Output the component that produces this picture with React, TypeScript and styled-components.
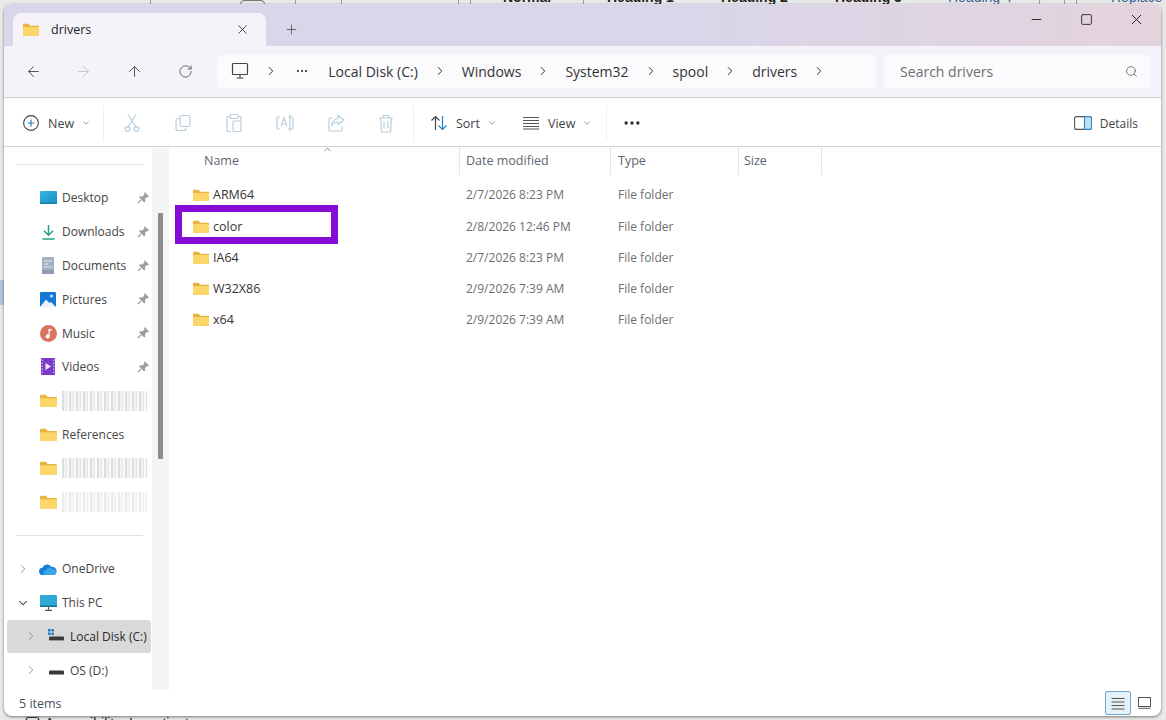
import React from "react";
import styled, { createGlobalStyle } from "styled-components";
import {
  ArrowLeft,
  ArrowRight,
  ArrowUp,
  ChevronDown,
  ChevronRight,
  ChevronUp,
  Mail,
  Minus,
  MoreHorizontal,
  Plus,
  RotateCw,
  Search,
  Square,
  X,
} from "lucide-react";

const GlobalStyle = createGlobalStyle`
  html, body { margin: 0; padding: 0; background: #e9e9e9; }
  * { box-sizing: border-box; }
  body { font-family: "Open Sans", "Noto Sans", "Liberation Sans", sans-serif; }
`;

// Page behind the explorer window
const Desktop = styled.div`
  position: relative;
  width: 1166px;
  height: 720px;
  overflow: hidden;
  padding: 4px 5px 4px 4px;
  background: #e9e9e9;
`;

const RibbonPeek = styled.div`
  position: absolute;
  top: 0;
  left: 0;
  right: 0;
  height: 5px;
  overflow: hidden;
  font-family: "Liberation Sans", Arial, sans-serif;
  font-size: 14px;
  line-height: 14px;
`;

const PeekLabel = styled.span<{ $x: number; $blue?: boolean }>`
  position: absolute;
  left: ${(p) => p.$x}px;
  top: -10px;
  white-space: nowrap;
  font-weight: ${(p) => (p.$blue ? 400 : 700)};
  color: ${(p) => (p.$blue ? "#3b5f92" : "#222")};
`;

const PeekRule = styled.i<{ $x: number }>`
  position: absolute;
  left: ${(p) => p.$x}px;
  top: 0;
  width: 1px;
  height: 5px;
  background: #9d9d9d;
`;

const PeekButton = styled.i`
  position: absolute;
  left: 240px;
  top: 0;
  width: 25px;
  height: 8px;
  border: 1px solid #777;
  border-radius: 4px;
`;

const PeekSelection = styled.div`
  position: absolute;
  left: 0;
  top: 280px;
  width: 4px;
  height: 25px;
  background: #b4c6dc;
`;

const StatusPeek = styled.div`
  position: absolute;
  left: 25px;
  bottom: -10px;
  display: flex;
  align-items: center;
  gap: 5px;
  font-family: "Liberation Sans", Arial, sans-serif;
  font-size: 14px;
  line-height: 14px;
  color: #222;
`;

const Window = styled.div`
  position: relative;
  width: 100%;
  height: 100%;
  display: flex;
  flex-direction: column;
  background: #fff;
  border-radius: 8px;
  overflow: hidden;
  box-shadow: 0 1px 3px rgba(0, 0, 0, 0.5);
`;

// Title bar
const TitleBar = styled.div`
  height: 42px;
  flex: none;
  display: flex;
  padding: 9px 0 0 9px;
  background: linear-gradient(90deg, #d9d6ea 0%, #d9d6e9 60%, #e4d3dc 100%);
`;

const Tab = styled.div`
  width: 253px;
  height: 33px;
  display: flex;
  align-items: center;
  padding: 0 16px 0 10px;
  gap: 12px;
  background: #f5f3f9;
  border-radius: 8px 8px 0 0;
  font-size: 12.5px;
  color: #222;
`;

const TabTitle = styled.span`
  flex: 1;
`;

const NewTab = styled.div`
  width: 50px;
  display: flex;
  align-items: center;
  justify-content: center;
  color: #444;
`;

const CaptionButtons = styled.div`
  margin-left: auto;
  height: 30px;
  display: flex;
  margin-top: -9px;
`;

const CaptionButton = styled.div`
  width: 50px;
  display: flex;
  align-items: center;
  justify-content: center;
  color: #222;
`;

// Address row
const AddressRow = styled.div`
  height: 52px;
  flex: none;
  display: flex;
  align-items: center;
  padding: 0 11px 1px 4px;
  background: #f5f3f9;
  border-bottom: 1px solid #cfcfd2;
`;

const NavButton = styled.div<{ $off?: boolean }>`
  width: 50.6px;
  display: flex;
  justify-content: center;
  color: ${(p) => (p.$off ? "#c3c3c8" : "#4a4a4a")};
`;

const Breadcrumb = styled.div`
  width: 659px;
  height: 33px;
  margin-left: 7px;
  display: flex;
  align-items: center;
  padding-left: 14px;
  background: #fbfafd;
  border-radius: 4px;
  font-size: 14px;
  color: #333;
`;

const CrumbSep = styled.span`
  width: 44px;
  flex: none;
  display: flex;
  justify-content: center;
  color: #333;
`;

const CrumbDots = styled.span`
  display: flex;
  width: 14px;
  margin: 0 19px 0 2px;
  color: #333;
`;

const SearchBox = styled.div`
  width: 266px;
  height: 33px;
  margin-left: 8px;
  display: flex;
  align-items: center;
  justify-content: space-between;
  padding: 0 12px 0 16px;
  background: #fbfafd;
  border-radius: 4px;
  font-size: 14px;
  color: #6f6f6f;
`;

// Command bar
const CommandBar = styled.div`
  height: 49px;
  flex: none;
  display: flex;
  align-items: center;
  padding-top: 2px;
  border-bottom: 1px solid #d4d4d4;
  font-size: 12.5px;
  color: #444;
`;

const CommandGroup = styled.div<{ $w: number }>`
  width: ${(p) => p.$w}px;
  height: 36px;
  flex: none;
  display: flex;
  align-items: center;
  border-right: 1px solid #f0f0f0;
`;

const LabelButton = styled.div<{ $pad: number; $w?: number }>`
  display: flex;
  align-items: center;
  flex: none;
  padding-left: ${(p) => p.$pad}px;
  gap: 8px;
  ${(p) => (p.$w ? `width: ${p.$w}px;` : "")}
`;

const FadedButton = styled.div`
  width: 50.8px;
  display: flex;
  justify-content: center;
`;

const FadedStart = styled.div`
  width: 3px;
`;

const DetailsButton = styled.div`
  margin-left: auto;
  padding-right: 23px;
  display: flex;
  align-items: center;
  gap: 8px;
  font-size: 12px;
`;

const SmallChevron = styled.span`
  display: flex;
  color: #8a8a8a;
  margin-left: -1px;
`;

const MoreButton = styled.div`
  padding-left: 15px;
  display: flex;
  color: #333;
`;

// Body
const Body = styled.div`
  flex: 1;
  min-height: 0;
  display: flex;
`;

const Sidebar = styled.nav`
  width: 148px;
  flex: none;
  padding-top: 17px;
  overflow: hidden;
  font-size: 12px;
  color: #444;
`;

const NavDivider = styled.div<{ $before?: number }>`
  height: 1px;
  margin: ${(p) => p.$before ?? 0}px 9px 16px 12px;
  background: #e1e1e1;
`;

const NavRow = styled.div<{ $depth?: number; $active?: boolean }>`
  position: relative;
  height: 33.8px;
  margin: 0 1px 0 3px;
  display: flex;
  align-items: center;
  padding-left: ${(p) => 9 + (p.$depth ?? 0) * 8}px;
  white-space: nowrap;
  border-radius: 3px;
  background: ${(p) => (p.$active ? "#d9d9d9" : "transparent")};
  color: ${(p) => (p.$active ? "#2a2a2a" : "#444")};
`;

const Expander = styled.span<{ $open?: boolean }>`
  width: 14px;
  margin-right: 9px;
  display: flex;
  justify-content: center;
  flex: none;
  color: ${(p) => (p.$open ? "#333" : "#888")};
`;

const NavIcon = styled.span`
  width: 18px;
  margin-right: 5px;
  display: flex;
  justify-content: center;
  flex: none;
`;

const PinSlot = styled.span`
  position: absolute;
  left: 130px;
  top: 10px;
  display: flex;
`;

const RedactedName = styled.span<{ $w: number; $fade?: number }>`
  display: block;
  width: ${(p) => p.$w}px;
  height: 20px;
  opacity: ${(p) => p.$fade ?? 1};
  background: repeating-linear-gradient(
    90deg,
    #dedede 0 2px,
    #f1f1f1 2px 4px,
    #e6e6e6 4px 5px,
    #fafafa 5px 7px
  );
`;

const ScrollGutter = styled.div`
  width: 17px;
  flex: none;
  padding: 66px 0 0 6px;
  background: #f5f5f5;
`;

const ScrollThumb = styled.div`
  width: 5px;
  height: 246px;
  background: #8c8c8c;
  border-radius: 1px;
`;

// File list
const ListPane = styled.main`
  flex: 1;
  min-width: 0;
`;

const ColumnGrid = styled.div`
  display: grid;
  grid-template-columns: 291px 151px 128px 83px;
`;

const HeaderRow = styled(ColumnGrid)`
  height: 28px;
  margin-bottom: 4.4px;
  font-size: 12.5px;
  color: #5d6670;
`;

const HeaderCell = styled.div<{ $pad: number }>`
  position: relative;
  display: flex;
  align-items: center;
  padding: 0 0 2px ${(p) => p.$pad}px;
  border-right: 1px solid #e6e6e6;
`;

const SortCaret = styled.span`
  position: absolute;
  left: 153px;
  top: -3px;
  display: flex;
  color: #777;
`;

const FileRow = styled(ColumnGrid)`
  position: relative;
  height: 31.2px;
  align-items: center;
  font-size: 12px;
  color: #6e6e6e;
`;

const NameCell = styled.div`
  display: flex;
  align-items: center;
  gap: 4px;
  padding-left: 24px;
  font-size: 12.5px;
  color: #333;
`;

const MetaCell = styled.div<{ $pad: number }>`
  padding-left: ${(p) => p.$pad}px;
`;

const CalloutBox = styled.div`
  position: absolute;
  left: 6px;
  top: -5.6px;
  width: 163px;
  height: 39px;
  border: 7px solid #850cd4;
  pointer-events: none;
`;

// Status bar
const StatusBar = styled.footer`
  height: 26px;
  flex: none;
  display: flex;
  align-items: center;
  justify-content: space-between;
  padding: 0 10px 0 15px;
  font-size: 12.5px;
  color: #47525e;
`;

const ViewToggles = styled.div`
  display: flex;
  align-items: center;
  gap: 6px;
`;

const ViewToggle = styled.div<{ $on?: boolean }>`
  width: ${(p) => (p.$on ? 26 : 14)}px;
  height: 24px;
  display: flex;
  align-items: center;
  justify-content: center;
  border: ${(p) => (p.$on ? "1.5px solid #6fa8cf" : "none")};
  background: ${(p) => (p.$on ? "#e6f0f7" : "transparent")};
  border-radius: 2px;
`;

const FolderIcon = ({ size = 16 }: { size?: number }) => (
  <svg width={size} height={size * 0.8} viewBox="0 0 20 16">
    <path d="M0 2a1 1 0 0 1 1-1h6l2 2.4H19a1 1 0 0 1 1 1V15a1 1 0 0 1-1 1H1a1 1 0 0 1-1-1Z" fill="#e8b33e" />
    <path d="M0 5h20v10a1 1 0 0 1-1 1H1a1 1 0 0 1-1-1Z" fill="#fbd668" />
  </svg>
);

const Pin = () => (
  <svg width="13" height="13" viewBox="0 0 13 13">
    <path d="M7.6 1 12 5.4l-1 .8-1-.2-2 2 .2 2.4-1 1L2 6.2l1-1 2.4.2 2-2-.2-1Z" fill="#9a9da1" />
    <path d="M4 8.8 1 12" stroke="#9a9da1" strokeWidth="1.2" />
  </svg>
);

const DesktopIcon = () => (
  <svg width="17" height="13" viewBox="0 0 17 13">
    <defs>
      <linearGradient id="desktopFill" x1="0" y1="0" x2="1" y2="1">
        <stop offset="0" stopColor="#35b4e4" />
        <stop offset="1" stopColor="#1690c4" />
      </linearGradient>
    </defs>
    <rect width="17" height="13" rx="1" fill="url(#desktopFill)" />
    <rect y="11.5" width="17" height="1.5" fill="#1d7fa8" />
  </svg>
);

const DownloadsIcon = () => (
  <svg width="13" height="16" viewBox="0 0 13 16" fill="none" stroke="#22a48a" strokeWidth="1.5">
    <path d="M6.5 1v10M2 6.8l4.500 4.400 4.500-4.400" />
    <path d="M.5 15h12" />
  </svg>
);

const DocumentsIcon = () => (
  <svg width="12" height="17" viewBox="0 0 12 17">
    <rect width="12" height="17" rx="1" fill="#a5b2c4" />
    <path d="M2 4h8M2 7h4M2 10h8" stroke="#e3e8ee" strokeWidth="1" />
    <rect y="13" width="12" height="4" fill="#8b9bb0" />
  </svg>
);

const PicturesIcon = () => (
  <svg width="16" height="15" viewBox="0 0 16 15">
    <rect width="16" height="15" rx="1" fill="#1478d4" />
    <path d="M0 15 6 7.500l3.500 3.500L11 10l5 5Z" fill="#eaf3fb" />
    <circle cx="11.500" cy="4" r="1.600" fill="#bfe0f7" />
  </svg>
);

const MusicIcon = () => (
  <svg width="17" height="17" viewBox="0 0 17 17">
    <circle cx="8.500" cy="8.500" r="8.500" fill="#d9755f" />
    <path d="M8.500 4h3v1.800H9.700v5.600a2 2 0 1 1-1.200-1.800Z" fill="#fff" />
  </svg>
);

const VideosIcon = () => (
  <svg width="14" height="17" viewBox="0 0 14 17">
    <rect width="14" height="17" rx="1" fill="#7a3bc9" />
    <path d="M4.500 5v7l5.500-3.500Z" fill="#f3e9fd" />
    <path d="M1.300 1.500v14M12.700 1.500v14" stroke="#d0b3ef" strokeWidth="1.200" strokeDasharray="1.500 1.500" />
  </svg>
);

const CloudIcon = () => (
  <svg width="18" height="12" viewBox="0 0 18 12">
    <path d="M4 12a3.600 3.600 0 0 1-.6-7.200A5 5 0 0 1 12.400 4 4 4 0 0 1 14.500 12Z" fill="#1a7fd8" />
    <path d="M7 12a2.400 2.400 0 0 1 0-4.800A3.800 3.800 0 0 1 14 6.400 2.800 2.800 0 0 1 15 12Z" fill="#3aa5ea" />
  </svg>
);

const PcIcon = () => (
  <svg width="17" height="16" viewBox="0 0 17 16">
    <rect width="17" height="12" rx="1" fill="#2aaad4" />
    <rect y="10.500" width="17" height="1.500" fill="#1d6f90" />
    <path d="M8.500 12v3M5 15.300h7" stroke="#4c5a63" strokeWidth="1.200" />
  </svg>
);

const DriveIcon = ({ tiles }: { tiles?: boolean }) => (
  <svg width="16" height="14" viewBox="0 0 16 14">
    {tiles && <path d="M0 0h2.600v2.600H0ZM3.400 0H6v2.600H3.400ZM0 3.400h2.600V6H0ZM3.400 3.400H6V6H3.400Z" fill="#1f7fd0" />}
    <rect x="1" y="7.500" width="15" height="4.500" rx="1" fill="#3a3a3a" />
    <rect x="1" y="11" width="15" height="1" fill="#9a9a9a" />
  </svg>
);

const FadedIcon = ({ children }: { children: React.ReactNode }) => (
  <svg width="20" height="20" viewBox="0 0 20 20" fill="none" stroke="#b9cfdd" strokeWidth="1.2">
    {children}
  </svg>
);

const Strokes = ({ d, color = "#555" }: { d: string; color?: string }) => (
  <svg width="18" height="18" viewBox="0 0 18 18" fill="none" stroke={color} strokeWidth="1.2">
    <path d={d} />
  </svg>
);

const pinned = [
  { label: "Desktop", icon: <DesktopIcon /> },
  { label: "Downloads", icon: <DownloadsIcon /> },
  { label: "Documents", icon: <DocumentsIcon /> },
  { label: "Pictures", icon: <PicturesIcon /> },
  { label: "Music", icon: <MusicIcon /> },
  { label: "Videos", icon: <VideosIcon /> },
];

const crumbs = ["Local Disk (C:)", "Windows", "System32", "spool", "drivers"];

const files = [
  { name: "ARM64", date: "2/7/2026 8:23 PM" },
  { name: "color", date: "2/8/2026 12:46 PM", marked: true },
  { name: "IA64", date: "2/7/2026 8:23 PM" },
  { name: "W32X86", date: "2/9/2026 7:39 AM" },
  { name: "x64", date: "2/9/2026 7:39 AM" },
];

const ribbonRules = [150, 295, 341, 458, 470, 583, 1039, 1064, 1076];

const App = () => {
  return (
    <Desktop>
      <GlobalStyle />
      <RibbonPeek>
        {ribbonRules.map((x) => (
          <PeekRule key={x} $x={x} />
        ))}
        <PeekButton />
        <PeekLabel $x={503}>Normal</PeekLabel>
        <PeekLabel $x={607}>Heading 1</PeekLabel>
        <PeekLabel $x={721}>Heading 2</PeekLabel>
        <PeekLabel $x={835}>Heading 3</PeekLabel>
        <PeekLabel $x={948} $blue>Heading 4</PeekLabel>
        <PeekLabel $x={1111} $blue>Replace</PeekLabel>
      </RibbonPeek>
      <PeekSelection />
      <StatusPeek>
        <Mail size={15} strokeWidth={1.4} />
        Accessibility: Investigate
      </StatusPeek>
      <Window>
        <TitleBar>
          <Tab>
            <FolderIcon />
            <TabTitle>drivers</TabTitle>
            <X size={15} strokeWidth={1.3} />
          </Tab>
          <NewTab>
            <Plus size={15} strokeWidth={1.2} />
          </NewTab>
          <CaptionButtons>
            <CaptionButton>
              <Minus size={15} strokeWidth={1.5} />
            </CaptionButton>
            <CaptionButton>
              <Square size={13} strokeWidth={1.6} />
            </CaptionButton>
            <CaptionButton>
              <X size={17} strokeWidth={1.4} />
            </CaptionButton>
          </CaptionButtons>
        </TitleBar>

        <AddressRow>
          <NavButton><ArrowLeft size={17} strokeWidth={1.3} /></NavButton>
          <NavButton $off><ArrowRight size={17} strokeWidth={1.3} /></NavButton>
          <NavButton><ArrowUp size={17} strokeWidth={1.3} /></NavButton>
          <NavButton><RotateCw size={15} strokeWidth={1.3} /></NavButton>
          <Breadcrumb>
            <Strokes d="M2.500 1.500h13a1 1 0 0 1 1 1v9a1 1 0 0 1-1 1h-13a1 1 0 0 1-1-1v-9a1 1 0 0 1 1-1ZM9 12.500v3M5.500 16h7" color="#444" />
            <CrumbSep><ChevronRight size={14} strokeWidth={1.7} /></CrumbSep>
            <CrumbDots><MoreHorizontal size={14} strokeWidth={1.8} /></CrumbDots>
            {crumbs.map((crumb) => (
              <React.Fragment key={crumb}>
                <span>{crumb}</span>
                <CrumbSep><ChevronRight size={14} strokeWidth={1.7} /></CrumbSep>
              </React.Fragment>
            ))}
          </Breadcrumb>
          <SearchBox>
            Search drivers
            <Search size={13} strokeWidth={1.4} color="#555" />
          </SearchBox>
        </AddressRow>

        <CommandBar>
          <CommandGroup $w={100}>
            <LabelButton $pad={18}>
              <svg width="18" height="18" viewBox="0 0 18 18" fill="none">
                <circle cx="9" cy="9" r="7.400" stroke="#444" strokeWidth="1.100" />
                <path d="M9 5.500v7M5.500 9h7" stroke="#2a80c0" strokeWidth="1.200" />
              </svg>
              <span>New</span>
              <SmallChevron><ChevronDown size={10} /></SmallChevron>
            </LabelButton>
          </CommandGroup>
          <CommandGroup $w={310}>
            <FadedStart />
            <FadedButton>
              <FadedIcon><path d="M6 1.500 14 14M14 1.500 6 14" /><circle cx="5.500" cy="16" r="2.400" /><circle cx="14.500" cy="16" r="2.400" /></FadedIcon>
            </FadedButton>
            <FadedButton>
              <FadedIcon><rect x="7" y="2.500" width="10" height="11" rx="2" /><path d="M7 5.500H5a2 2 0 0 0-2 2v8a2 2 0 0 0 2 2h6a2 2 0 0 0 2-2v-1" /></FadedIcon>
            </FadedButton>
            <FadedButton>
              <FadedIcon><path d="M6 3.500H4a1 1 0 0 0-1 1v13a1 1 0 0 0 1 1h3M14 3.500h2a1 1 0 0 1 1 1v3" /><rect x="6" y="1.500" width="8" height="4" rx="1" /><rect x="9" y="8" width="8" height="10.500" rx="1" /></FadedIcon>
            </FadedButton>
            <FadedButton>
              <FadedIcon><path d="M5 4H3a1 1 0 0 0-1 1v10a1 1 0 0 0 1 1h2M13 4h4a1 1 0 0 1 1 1v10a1 1 0 0 1-1 1h-4M15 1.500v17" /><path d="M6 13l3-8 3 8M7 11h4" /></FadedIcon>
            </FadedButton>
            <FadedButton>
              <FadedIcon><path d="M7 5H4a1 1 0 0 0-1 1v11a1 1 0 0 0 1 1h11a1 1 0 0 0 1-1v-4" /><path d="M12 2.500l6 4.500-6 4.500V9c-3 0-5 1-6.500 4 .5-4 3-7 6.500-7.500Z" /></FadedIcon>
            </FadedButton>
            <FadedButton>
              <FadedIcon><path d="M3 5h14M7.500 5V2.500h5V5M4.500 5l1 14h9l1-14M8 8.500v7M12 8.500v7" /></FadedIcon>
            </FadedButton>
          </CommandGroup>
          <LabelButton $pad={16} $w={99}>
            <svg width="18" height="18" viewBox="0 0 18 18" fill="none" strokeWidth="1.200">
              <path d="M5.500 16V2.500M1.500 6.500l4-4 4 4" stroke="#444" />
              <path d="M12.500 2v13.500M8.500 11.500l4 4 4-4" stroke="#2a80c0" />
            </svg>
            <span>Sort</span>
            <SmallChevron><ChevronDown size={10} /></SmallChevron>
          </LabelButton>
          <CommandGroup $w={94}>
            <LabelButton $pad={9}>
              <Strokes d="M1 3.500h16M1 6.500h16M1 9.500h16M1 12.500h16M1 15h16" />
              <span>View</span>
              <SmallChevron><ChevronDown size={10} /></SmallChevron>
            </LabelButton>
          </CommandGroup>
          <MoreButton><MoreHorizontal size={20} strokeWidth={2.2} /></MoreButton>
          <DetailsButton>
            <svg width="18" height="14" viewBox="0 0 18 14" fill="none">
              <rect x=".6" y=".6" width="16.800" height="12.800" rx="2" stroke="#555" strokeWidth="1.100" />
              <path d="M10.500.6h5a2 2 0 0 1 2 2v8.800a2 2 0 0 1-2 2h-5Z" fill="#bfe0f3" stroke="#2a86c5" strokeWidth="1.100" />
            </svg>
            Details
          </DetailsButton>
        </CommandBar>

        <Body>
          <Sidebar>
            <NavDivider />
            {pinned.map(({ label, icon }) => (
              <NavRow key={label}>
                <Expander />
                <NavIcon>{icon}</NavIcon>
                {label}
                <PinSlot><Pin /></PinSlot>
              </NavRow>
            ))}
            <NavRow>
              <Expander />
              <NavIcon><FolderIcon size={17} /></NavIcon>
              <RedactedName $w={85} />
            </NavRow>
            <NavRow>
              <Expander />
              <NavIcon><FolderIcon size={17} /></NavIcon>
              References
            </NavRow>
            <NavRow>
              <Expander />
              <NavIcon><FolderIcon size={17} /></NavIcon>
              <RedactedName $w={85} />
            </NavRow>
            <NavRow>
              <Expander />
              <NavIcon><FolderIcon size={17} /></NavIcon>
              <RedactedName $w={85} $fade={0.6} />
            </NavRow>
            <NavDivider $before={16} />
            <NavRow>
              <Expander><ChevronRight size={14} strokeWidth={1.5} /></Expander>
              <NavIcon><CloudIcon /></NavIcon>
              OneDrive
            </NavRow>
            <NavRow>
              <Expander $open><ChevronDown size={14} strokeWidth={1.8} /></Expander>
              <NavIcon><PcIcon /></NavIcon>
              This PC
            </NavRow>
            <NavRow $depth={1} $active>
              <Expander><ChevronRight size={14} strokeWidth={1.5} /></Expander>
              <NavIcon><DriveIcon tiles /></NavIcon>
              Local Disk (C:)
            </NavRow>
            <NavRow $depth={1}>
              <Expander><ChevronRight size={14} strokeWidth={1.5} /></Expander>
              <NavIcon><DriveIcon /></NavIcon>
              OS (D:)
            </NavRow>
          </Sidebar>
          <ScrollGutter>
            <ScrollThumb />
          </ScrollGutter>
          <ListPane>
            <HeaderRow>
              <HeaderCell $pad={35}>
                Name
                <SortCaret><ChevronUp size={11} /></SortCaret>
              </HeaderCell>
              <HeaderCell $pad={6}>Date modified</HeaderCell>
              <HeaderCell $pad={7}>Type</HeaderCell>
              <HeaderCell $pad={5}>Size</HeaderCell>
            </HeaderRow>
            {files.map((file) => (
              <FileRow key={file.name}>
                <NameCell>
                  <FolderIcon />
                  {file.name}
                </NameCell>
                <MetaCell $pad={6}>{file.date}</MetaCell>
                <MetaCell $pad={7}>File folder</MetaCell>
                {file.marked && <CalloutBox />}
              </FileRow>
            ))}
          </ListPane>
        </Body>

        <StatusBar>
          5 items
          <ViewToggles>
            <ViewToggle $on>
              <Strokes d="M2.500 4.500h13M2.500 8h13M2.500 11.500h13M2.500 15h13" />
            </ViewToggle>
            <ViewToggle>
              <svg width="13" height="12" viewBox="0 0 13 12" fill="none">
                <rect x=".5" y=".5" width="12" height="9" stroke="#555" />
                <path d="M.5 11.300h12" stroke="#555" />
              </svg>
            </ViewToggle>
          </ViewToggles>
        </StatusBar>
      </Window>
    </Desktop>
  );
};

export default App;
